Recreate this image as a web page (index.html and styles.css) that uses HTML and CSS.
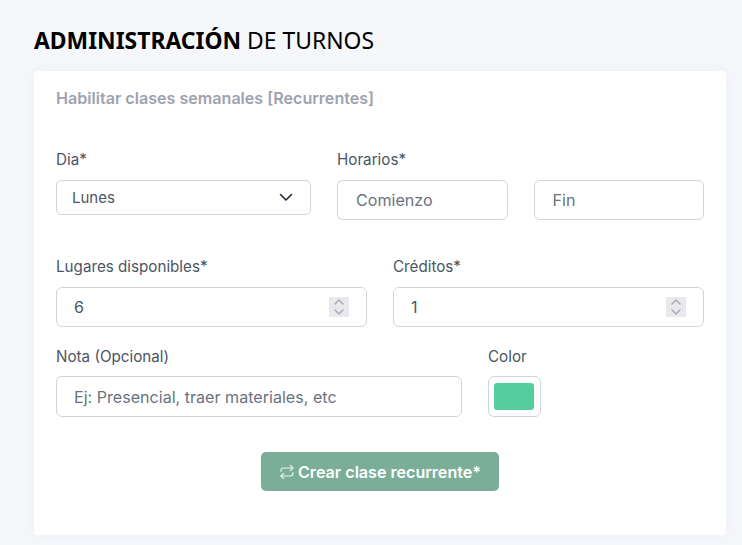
FILE: index.html
```html
<!DOCTYPE html>
<html lang="es">
<head>
<meta charset="utf-8">
<title>Administración de turnos</title>
<link rel="stylesheet" href="styles.css">
</head>
<body>
<main class="page">
  <h1 class="title"><strong>ADMINISTRACIÓN</strong> DE TURNOS</h1>
  <section class="card">
    <h2 class="subtitle">Habilitar clases semanales [Recurrentes]</h2>
    <form class="form">
      <div class="row row-top">
        <div class="field field-day">
          <label class="label">Dia*</label>
          <div class="control">
            <select class="select"><option>Lunes</option></select>
            <svg class="chevron" viewBox="0 0 16 16" width="16" height="16" fill="none" stroke="#1f2937" stroke-width="1.6" stroke-linecap="round" stroke-linejoin="round"><path d="M2.5 5.5 8 11l5.5-5.5"/></svg>
          </div>
        </div>
        <div class="field field-times">
          <label class="label">Horarios*</label>
          <div class="times">
            <input class="input input-time" type="text" placeholder="Comienzo">
            <input class="input input-time" type="text" placeholder="Fin">
          </div>
        </div>
      </div>
      <div class="row row-mid">
        <div class="field field-half">
          <label class="label">Lugares disponibles*</label>
          <div class="control">
            <input class="input" type="number" value="6">
            <span class="spinner"><svg viewBox="0 0 20 20" width="20" height="20" fill="none" stroke="#a4a9b4" stroke-width="1.4" stroke-linecap="round" stroke-linejoin="round"><path d="m6 7 4-4 4 4"/><path d="m6 13 4 4 4-4"/></svg></span>
          </div>
        </div>
        <div class="field field-half">
          <label class="label">Créditos*</label>
          <div class="control">
            <input class="input" type="number" value="1">
            <span class="spinner"><svg viewBox="0 0 20 20" width="20" height="20" fill="none" stroke="#a4a9b4" stroke-width="1.4" stroke-linecap="round" stroke-linejoin="round"><path d="m6 7 4-4 4 4"/><path d="m6 13 4 4 4-4"/></svg></span>
          </div>
        </div>
      </div>
      <div class="row row-note">
        <div class="field field-note">
          <label class="label label-note">Nota (Opcional)</label>
          <input class="input" type="text" placeholder="Ej: Presencial, traer materiales, etc">
        </div>
        <div class="field field-color">
          <label class="label label-note">Color</label>
          <div class="color-box"><span class="swatch"></span></div>
        </div>
      </div>
      <div class="actions">
        <button class="button" type="button">
          <svg class="repeat" viewBox="0 0 24 24" width="16" height="16" fill="none" stroke="currentColor" stroke-width="1.8" stroke-linecap="round" stroke-linejoin="round"><path d="m17 2 4 4-4 4"/><path d="M3 11v-1a4 4 0 0 1 4-4h14"/><path d="m7 22-4-4 4-4"/><path d="M21 13v1a4 4 0 0 1-4 4H3"/></svg>
          Crear clase recurrente*
        </button>
      </div>
    </form>
  </section>
</main>
</body>
</html>
```
FILE: styles.css
```css
* { box-sizing: border-box; }
html, body { margin: 0; height: 100%; overflow: hidden; }
body {
  background: #f5f7fb;
  font-family: Inter, "Liberation Sans", sans-serif;
  color: #4b5563;
}
.page { padding: 24px 16px 10px 34px; }
.title {
  margin: 0 0 14px;
  font-family: "Noto Sans", sans-serif;
  font-size: 22.9px;
  line-height: 33px;
  font-weight: 400;
  color: #000;
}
.title strong { font-weight: 700; }
.card {
  background: #fff;
  border-radius: 4px;
  height: 464px;
  padding: 16px 22px;
  box-shadow: 0 0 16px rgba(170, 180, 200, .12);
}
.subtitle {
  margin: 0;
  font-size: 16.1px;
  line-height: 22px;
  font-weight: 600;
  color: #9ca3af;
}
.form { display: flex; flex-direction: column; }
.row { display: flex; gap: 26px; }
.row-top { margin-top: 40px; }
.row-mid { margin-top: 36px; }
.row-note { margin-top: 19px; }
.field { display: flex; flex-direction: column; min-width: 0; }
.label {
  font-size: 15.2px;
  line-height: 22px;
  color: #4b5563;
  margin-bottom: 9px;
}
.label-note { margin-bottom: 8px; }
.field-day { width: 255px; }
.field-times { width: 367px; }
.times { display: flex; gap: 26px; }
.times .input { flex: 1 1 0; min-width: 0; }
.field-half { width: 311px; }
.field-note { width: 406px; }
.field-color { width: 53px; }
.control { position: relative; }
.select {
  display: block;
  width: 100%;
  height: 35px;
  appearance: none;
  -webkit-appearance: none;
  background: #fff;
  border: 1px solid #d1d5db;
  border-radius: 5px;
  padding: 0 15px;
  font: 15px Inter, sans-serif;
  color: #4b5563;
}
.chevron { position: absolute; right: 17px; top: 9px; pointer-events: none; }
.input {
  display: block;
  width: 100%;
  height: 40px;
  background: #fff;
  border: 1px solid #d1d5db;
  border-radius: 6px;
  padding: 0 17px;
  font: 16.1px Inter, sans-serif;
  color: #4b5563;
  outline: 0;
}
.input-time { padding: 0 17px 0 18px; }
.input::placeholder { color: #6b7280; opacity: 1; }
.input::-webkit-inner-spin-button { -webkit-appearance: none; appearance: none; }
.spinner {
  position: absolute;
  right: 18px;
  top: 10px;
  width: 20px;
  height: 20px;
  background: #e8e8ed;
  pointer-events: none;
}
.spinner svg { display: block; }
.field-note .input { height: 41px; }
.color-box {
  width: 53px;
  height: 41px;
  border: 1px solid #d1d5db;
  border-radius: 6px;
  padding: 6px 5px;
  background: #fff;
}
.swatch { display: block; width: 40px; height: 27px; border-radius: 3px; background: #55cd9c; }
.actions { display: flex; justify-content: center; margin-top: 35px; }
.button {
  display: flex;
  align-items: center;
  gap: 3px;
  width: 238px;
  height: 39px;
  justify-content: center;
  border: 0;
  border-radius: 5px;
  background: #7aae98;
  color: #fff;
  font: 600 16.1px Inter, sans-serif;
}
.repeat { opacity: .85; }
```
